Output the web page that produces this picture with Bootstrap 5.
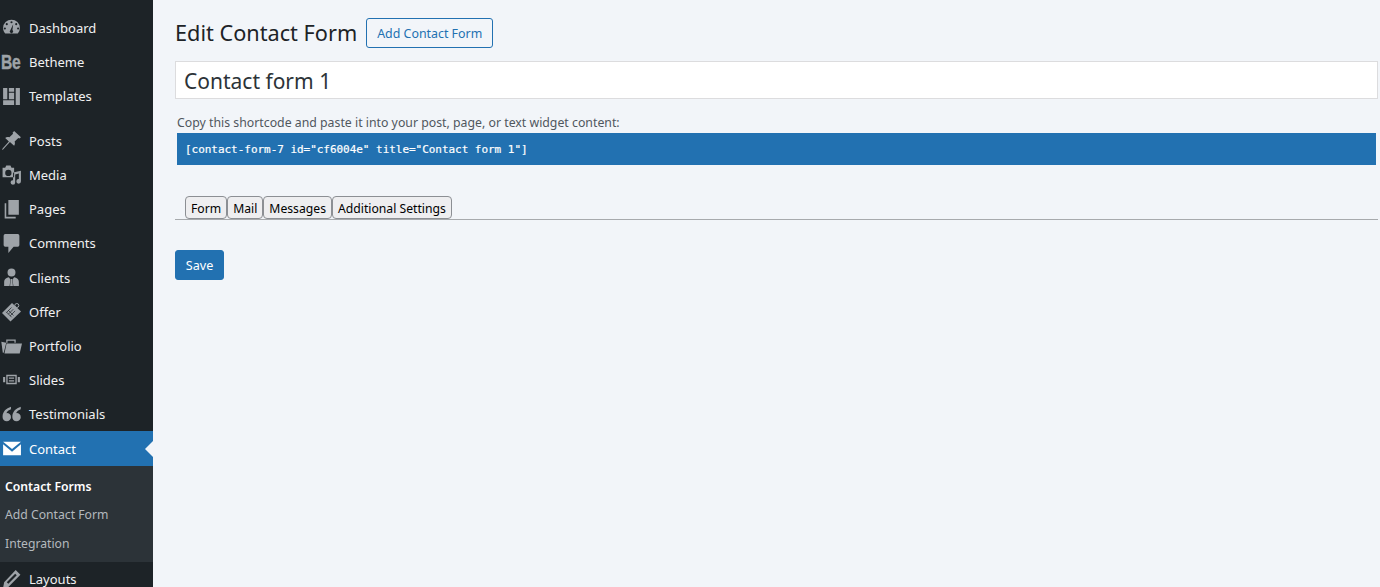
<!DOCTYPE html>
<html lang="en"><head><meta charset="utf-8"><title>Edit Contact Form</title>
<link href="https://cdn.jsdelivr.net/npm/bootstrap@5.3.0/dist/css/bootstrap.min.css" rel="stylesheet">
<style>
html,body{height:100%;overflow:hidden}
body{background:#f2f5f9;font-family:"Noto Sans","Open Sans",sans-serif;font-size:12.2px;color:#1d2327}
.wp-shell{height:587px;overflow:hidden}
.wp-side{width:153px;background:#1d2327;padding-top:10.6px;flex:none;overflow:hidden}
.wp-item{display:flex;align-items:center;height:34.2px;color:#f0f0f1;font-size:13px;text-decoration:none;position:relative;white-space:nowrap}
.wp-label{padding-top:2px}
.wp-ico{width:29px;flex:none;display:flex;align-items:center;padding-left:1px;color:#9ea3a8}
.wp-ico svg{width:21px;height:21px;fill:currentColor;display:block}
.wp-be{display:inline-block;font:700 20px/20px "Liberation Sans",sans-serif;letter-spacing:-.4px;transform:scaleX(.78);transform-origin:0 50%;-webkit-text-stroke:.4px currentColor}
.wp-sep{height:10.4px}
.wp-active{background:#2271b1;color:#fff;height:34.6px}
.wp-active .wp-ico{color:#fff}
.wp-active::after{content:"";position:absolute;right:0;top:10px;border:8px solid transparent;border-right-color:#f2f5f9;border-left:0}
.wp-sub{background:#2c3338;padding:6.7px 0 4px;font-size:12.2px;height:96px}
.wp-sub a{display:block;height:28.6px;line-height:28px;padding-left:5px;color:#b4b9be;text-decoration:none;white-space:nowrap}
.wp-sub a.wp-cur{color:#fff;font-weight:600}
.wp-main{flex:1;min-width:0;padding:18px 2px 0 22px}
.wp-head{gap:9px}
.wp-title{font-size:21.7px;line-height:30px;font-weight:400;margin:0;color:#1d2327}
.wp-addnew{font-size:12.4px;line-height:29px;height:30px;padding:0 10px;border:1px solid #2271b1;color:#2271b1;background:transparent;border-radius:3px}
.wp-name{height:38px;margin-top:13px;font-size:21px;line-height:28px;padding:1px 8px 0;border:1px solid #dcdcde;border-radius:0;color:#2c3338;background:#fff}
.wp-hint{margin:15px 0 0 2px;line-height:17px;color:#50575e;height:19px;font-size:12.3px}
.wp-code{margin:0 2px;height:32px;background:#2271b1;color:#fff;font:400 11px/33px "DejaVu Sans Mono",monospace;padding-left:8px;letter-spacing:-.035px;white-space:pre;-webkit-text-stroke:.2px #fff}
.wp-tabs{margin-top:31px;padding-left:10px;border-bottom:1px solid #a7aaad;height:24px}
.wp-tab{height:23px;line-height:23px;padding:0 5px;border:1px solid #8c8f94;border-radius:4px;background:#eeeef0;color:#000;font-size:12.2px}
.wp-save{margin-top:30px;width:49px;height:30px;padding:3px 0 0;background:#2271b1;border:1px solid #2271b1;color:#fff;font-size:12.6px;border-radius:3px}
</style></head>
<body>
<div class="wp-shell d-flex">
<nav class="wp-side">
<a class="wp-item" href="#"><span class="wp-ico"><svg viewBox="0 0 20 20"><path fill-rule="evenodd" d="M10 2.500a8 8 0 0 0-8 8c0 2 .7 3.900 2 5.300h12a8 8 0 0 0 2-5.300 8 8 0 0 0-8-8zm0 1.500a1 1 0 1 1 0 2 1 1 0 0 1 0-2zM5.500 5.800a1 1 0 1 1 0 2 1 1 0 0 1 0-2zm9 0a1 1 0 1 1 0 2 1 1 0 0 1 0-2zM3.700 10a1 1 0 1 1 0 2 1 1 0 0 1 0-2zm12.600 0a1 1 0 1 1 0 2 1 1 0 0 1 0-2zM11.600 7l-.7 5.400a1.600 1.600 0 1 1-2 .1z"/></svg></span><span class="wp-label">Dashboard</span></a>
<a class="wp-item" href="#"><span class="wp-ico"><span class="wp-be">Be</span></span><span class="wp-label">Betheme</span></a>
<a class="wp-item" href="#"><span class="wp-ico"><svg viewBox="0 0 20 20"><path d="M2 2h4v10.500H2zM2 13.500h10.500V18H2zM7.500 2h5v3.500h-5zM7.500 6.500h5v6h-5zM14 2h4v16h-4z"/></svg></span><span class="wp-label">Templates</span></a>
<div class="wp-sep"></div>
<a class="wp-item" href="#"><span class="wp-ico"><svg viewBox="0 0 20 20"><path d="M12.500 1l6.500 6-1.500 1-1-.5-3.500 3.500c.5 1.500.3 3-.5 4L8.500 11.500 2 18.500l-1 .5.500-1.500L7.500 11 4 7.500c1-.8 2.500-1 4-.5L11.500 3.500 11 2.500z"/></svg></span><span class="wp-label">Posts</span></a>
<a class="wp-item" href="#"><span class="wp-ico"><svg viewBox="0 0 20 20"><path fill-rule="evenodd" d="M1.500 3.500h2.500l1-2h4l1 2h2.500v9h-11zm5.500 2a3 3 0 1 0 0 6 3 3 0 0 0 0-6zM19 6.500v10a2.200 2.200 0 1 1-2-2.100V9l-3.500 1v7.500a2.200 2.200 0 1 1-2-2.100V8z"/></svg></span><span class="wp-label">Media</span></a>
<a class="wp-item" href="#"><span class="wp-ico"><svg viewBox="0 0 20 20"><path d="M7 1h10v14H7zM5 4v13h9v1.500H3.500V4z"/></svg></span><span class="wp-label">Pages</span></a>
<a class="wp-item" href="#"><span class="wp-ico"><svg viewBox="0 0 20 20"><path d="M4 1h12a1.500 1.500 0 0 1 1.500 1.500v9A1.500 1.500 0 0 1 16 13h-4l-5 6v-6H4a1.500 1.500 0 0 1-1.500-1.500v-9A1.500 1.500 0 0 1 4 1z"/></svg></span><span class="wp-label">Comments</span></a>
<a class="wp-item" href="#"><span class="wp-ico"><svg viewBox="0 0 20 20"><path fill-rule="evenodd" d="M10 1.500a3.800 3.800 0 1 1 0 7.600 3.800 3.800 0 0 1 0-7.600zM3 18v-4c0-2.500 2-3.800 4.500-4.200L9 12l-.8 6zm14 0v-4c0-2.500-2-3.800-4.500-4.200L11 12l.8 6z"/><path d="M9.300 11.500h1.400l.6 6.500H8.700z"/></svg></span><span class="wp-label">Clients</span></a>
<a class="wp-item" href="#"><span class="wp-ico"><svg viewBox="0 0 21 21"><path d="M11 2l9 8.500L9.500 20.500 1 12z"/><circle cx="15.800" cy="4.500" r="2" fill="none" stroke="currentColor" stroke-width="1"/><path d="M5.500 11.500l5-5M7.300 13.200l5-5M9.100 14.900l5-5M7 9l5.500 5.500M5.200 10.800l5.500 5.500" stroke="#1d2327" stroke-width=".7" fill="none"/></svg></span><span class="wp-label">Offer</span></a>
<a class="wp-item" href="#"><span class="wp-ico"><svg viewBox="0 0 20 20"><path d="M.3 6.500L5 7.300 2.600 16.800H1.700zM5.300 8H20l-2.200 9.500H3.300zM5 7.300V4.300h9v3h-1.200V5.500H6.200v1.800z"/></svg></span><span class="wp-label">Portfolio</span></a>
<a class="wp-item" href="#"><span class="wp-ico"><svg viewBox="0 0 20 20"><path fill-rule="evenodd" d="M5 5.500h10v9H5zm1.300 1.300v6.400h7.400V6.800zM7.500 8.200h5v1.100h-5zm0 2.500h5v1.100h-5zM2 7.500h2v5H2zM16 7.500h2v5h-2z"/></svg></span><span class="wp-label">Slides</span></a>
<a class="wp-item" href="#"><span class="wp-ico"><svg viewBox="0 0 20 20"><path d="M9.500 2.500C5 4 1.500 7 1.500 12a4 4 0 0 0 4 4.500 4 4 0 0 0 4-4 3.800 3.800 0 0 0-4.400-3.800C5.700 7 7.500 5.700 9.500 5zM18.800 2.500c-4.500 1.500-8 4.500-8 9.500a4 4 0 0 0 4 4.500 4 4 0 0 0 4-4 3.800 3.800 0 0 0-4.400-3.800c.6-1.700 2.400-3 4.400-3.700z"/></svg></span><span class="wp-label">Testimonials</span></a>
<a class="wp-item wp-active" href="#"><span class="wp-ico"><svg viewBox="0 0 20 20"><path d="M2 3.500h17L10.500 10.500zM2 6l8.500 7L19 6v10.500H2z"/></svg></span><span class="wp-label">Contact</span></a>
<div class="wp-sub"><a class="wp-cur" href="#">Contact Forms</a><a href="#">Add Contact Form</a><a href="#">Integration</a></div>
<a class="wp-item" href="#"><span class="wp-ico"><svg viewBox="0 0 20 20"><path fill-rule="evenodd" d="M14 2l4.500 4.500L7 18l-5 1 1-5.500zM13.500 5.500L5.500 13.500l1.500 1.500 8-8z"/></svg></span><span class="wp-label">Layouts</span></a>
</nav>
<main class="wp-main">
<div class="d-flex align-items-center wp-head"><h1 class="wp-title">Edit Contact Form</h1><a class="btn wp-addnew" href="#">Add Contact Form</a></div>
<input class="form-control wp-name" type="text" value="Contact form 1" aria-label="Title">
<p class="wp-hint">Copy this shortcode and paste it into your post, page, or text widget content:</p>
<div class="wp-code">[contact-form-7 id="cf6004e" title="Contact form 1"]</div>
<div class="wp-tabs d-flex"><div class="wp-tab">Form</div><div class="wp-tab">Mail</div><div class="wp-tab">Messages</div><div class="wp-tab">Additional Settings</div></div>
<button class="btn wp-save d-block" type="button">Save</button>
</main>
</div>
<script src="https://cdn.jsdelivr.net/npm/bootstrap@5.3.0/dist/js/bootstrap.bundle.min.js"></script>
</body></html>
